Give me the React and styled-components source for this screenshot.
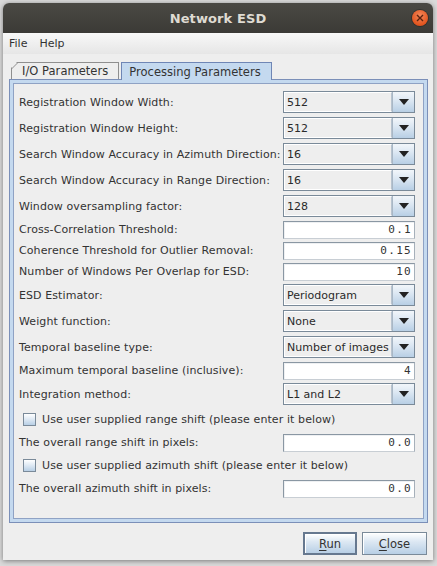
import React from "react";
import styled, { createGlobalStyle, css } from "styled-components";

const Global = createGlobalStyle`
  html, body { margin: 0; padding: 0; }
  body {
    background: #dadada;
    width: 437px;
    height: 566px;
    overflow: hidden;
    font-family: "DejaVu Sans", sans-serif;
  }
`;

const Window = styled.div`
  margin: 3px 0 0 3px;
  width: 430px;
  height: 557px;
  background: #eeeeee;
  border-radius: 6px 6px 0 0;
  box-shadow: 0 1px 5px rgba(0, 0, 0, 0.45);
  display: flex;
  flex-direction: column;
  overflow: hidden;
`;

const TitleBar = styled.div`
  position: relative;
  height: 30px;
  flex: none;
  background: linear-gradient(#4a4944, #3b3a36);
  color: #dfdbd2;
  font: bold 13px "DejaVu Sans", sans-serif;
  display: flex;
  align-items: center;
  justify-content: center;
  letter-spacing: 0.1px;
`;

const CloseBtn = styled.div`
  position: absolute;
  top: 7px;
  right: 5px;
  width: 16px;
  height: 16px;
  border-radius: 50%;
  background: radial-gradient(circle at 50% 35%, #f4875a, #e2551f 70%, #c9461a);
  box-shadow: 0 0 0 1px rgba(0, 0, 0, 0.25);
  display: flex;
  align-items: center;
  justify-content: center;
`;

const MenuBar = styled.div`
  height: 21px;
  flex: none;
  background: linear-gradient(#f8f8f8, #e6e6e6);
  display: flex;
  align-items: center;
  padding-left: 0;
  font-size: 11px;
  color: #333333;
`;

const MenuItem = styled.span`
  padding: 0 6px;
`;

const Body = styled.div`
  flex: 1;
  display: flex;
  flex-direction: column;
  padding: 8px 5px 0 6px;
`;

const TabStrip = styled.div`
  display: flex;
  align-items: flex-end;
  height: 17px;
  padding-left: 2px;
  gap: 2px;
  position: relative;
  z-index: 1;
`;

const Tab = styled.div`
  height: 17px;
  box-sizing: border-box;
  padding: 0 10px 0 10px;
  font-size: 11.5px;
  letter-spacing: 0.03px;
  color: #333333;
  display: flex;
  align-items: center;
  border: 1px solid #8f8f8f;
  border-bottom: none;
  clip-path: polygon(6px 0, 100% 0, 100% 100%, 0 100%, 0 6px);
  background: #eeeeee;
  position: relative;
  ${(p) =>
    p.$selected &&
    css`
      background: #c4d9ef;
      border-color: #6f86b5;
      padding: 0 10px 0 7px;
      height: 18px;
      margin-bottom: -1px;
      clip-path: none;
    `}
`;

const TabSlant = styled.svg`
  position: absolute;
  left: -1px;
  top: -1px;
`;

const TabPanel = styled.div`
  height: 444px;
  box-sizing: border-box;
  border: 1px solid #7b8fb8;
  background: #c4d9ef;
  padding: 3px;
  display: flex;
`;

const TabInner = styled.div`
  flex: 1;
  border: 1px solid #8fa2c4;
  background: #eeeeee;
  padding: 5px 8px 0 5px;
  display: flex;
  flex-direction: column;
`;

const Row = styled.div`
  height: ${(p) => p.$h}px;
  display: grid;
  grid-template-columns: 1fr 132px;
  align-items: center;
  font-size: 11px;
  letter-spacing: 0.09px;
  color: #333333;
  white-space: nowrap;
`;

const CheckRow = styled.div`
  height: ${(p) => p.$h}px;
  display: flex;
  align-items: center;
  padding-left: 4px;
  gap: 6px;
  font-size: 11px;
  letter-spacing: 0.09px;
  color: #333333;
  white-space: nowrap;
`;

const Box = styled.div`
  width: 13px;
  height: 13px;
  box-sizing: border-box;
  border: 1px solid #7a8a99;
  background: linear-gradient(#ffffff, #dde8f3 50%, #b8cfe5);
`;

const Combo = styled.div`
  height: 22px;
  box-sizing: border-box;
  border: 1px solid #7a8a99;
  background: #eeeeee;
  display: flex;
`;

const ComboText = styled.div`
  flex: 1;
  display: flex;
  align-items: center;
  padding-left: 2px;
  border: 1px solid #ffffff;
  border-right: 1px solid #b8c4d0;
  font-size: 11px;
  letter-spacing: 0;
  color: #2a2a2a;
  white-space: nowrap;
  overflow: hidden;
`;

const ComboArrow = styled.div`
  width: 21px;
  flex: none;
  background: linear-gradient(#f2f6fa, #dde8f3 40%, #b8cfe5);
  border-left: 1px solid #a9b7c5;
  display: flex;
  align-items: center;
  justify-content: center;
`;

const Field = styled.div`
  height: 18px;
  box-sizing: border-box;
  background: #ffffff;
  border: 1px solid #8a97a3;
  border-right-color: #a6b0ba;
  border-bottom-color: #c8ced4;
  box-shadow: inset 1px 1px 0 #eef0f2;
  display: flex;
  align-items: center;
  justify-content: flex-end;
  padding-right: 2px;
  font: 11px "DejaVu Sans Mono", monospace;
  letter-spacing: 1.3px;
  color: #333333;
`;

const ButtonBar = styled.div`
  display: flex;
  justify-content: flex-end;
  gap: 5px;
  padding: 9px 1px 0 0;
`;

const Button = styled.div`
  height: 23px;
  width: ${(p) => p.$w}px;
  box-sizing: border-box;
  display: flex;
  align-items: center;
  justify-content: center;
  font-size: 11.5px;
  color: #333333;
  border: 1px solid #7a8a99;
  background: linear-gradient(#ffffff, #dde8f3 40%, #b8cfe5);
  box-shadow: inset 1px 1px 0 #ffffff;
  ${(p) =>
    p.$default &&
    css`
      border: 2px solid #66788f;
      box-shadow: inset 1px 1px 0 #ffffff;
    `}
  u { text-decoration: underline; text-underline-offset: 2px; }
`;

const Arrow = () => (
  <svg width="10" height="6" viewBox="0 0 10 6">
    <path d="M0 0 H10 L5 6 Z" fill="#222" />
  </svg>
);

const ComboBox = ({ value }) => (
  <Combo>
    <ComboText>{value}</ComboText>
    <ComboArrow>
      <Arrow />
    </ComboArrow>
  </Combo>
);

const rows = [
  { t: "combo", l: "Registration Window Width:", v: "512" },
  { t: "combo", l: "Registration Window Height:", v: "512" },
  { t: "combo", l: "Search Window Accuracy in Azimuth Direction:", v: "16" },
  { t: "combo", l: "Search Window Accuracy in Range Direction:", v: "16" },
  { t: "combo", l: "Window oversampling factor:", v: "128" },
  { t: "field", l: "Cross-Correlation Threshold:", v: "0.1" },
  { t: "field", l: "Coherence Threshold for Outlier Removal:", v: "0.15" },
  { t: "field", l: "Number of Windows Per Overlap for ESD:", v: "10" },
  { t: "combo", l: "ESD Estimator:", v: "Periodogram" },
  { t: "combo", l: "Weight function:", v: "None" },
  { t: "combo", l: "Temporal baseline type:", v: "Number of images" },
  { t: "field", l: "Maximum temporal baseline (inclusive):", v: "4" },
  { t: "combo", l: "Integration method:", v: "L1 and L2" },
  { t: "check", l: "Use user supplied range shift (please enter it below)" },
  { t: "field", l: "The overall range shift in pixels:", v: "0.0" },
  { t: "check", l: "Use user supplied azimuth shift (please enter it below)" },
  { t: "field", l: "The overall azimuth shift in pixels:", v: "0.0" },
];

export default function App() {
  return (
    <>
      <Global />
      <Window>
        <TitleBar>
          Network ESD
          <CloseBtn>
            <svg width="8" height="8" viewBox="0 0 8 8">
              <path d="M1 1 L7 7 M7 1 L1 7" stroke="#5a2310" strokeWidth="1.4" />
            </svg>
          </CloseBtn>
        </TitleBar>
        <MenuBar>
          <MenuItem>File</MenuItem>
          <MenuItem>Help</MenuItem>
        </MenuBar>
        <Body>
          <TabStrip>
            <Tab>
              <TabSlant width="8" height="8" viewBox="0 0 8 8">
                <path d="M0.5 7 L7 0.5" stroke="#8f8f8f" strokeWidth="1" />
              </TabSlant>
              I/O Parameters
            </Tab>
            <Tab $selected>Processing Parameters</Tab>
          </TabStrip>
          <TabPanel>
            <TabInner>
              {rows.map((r, i) =>
                r.t === "check" ? (
                  <CheckRow key={i} $h={25}>
                    <Box />
                    {r.l}
                  </CheckRow>
                ) : (
                  <Row key={i} $h={r.t === "combo" ? 26 : 21}>
                    <span>{r.l}</span>
                    {r.t === "combo" ? <ComboBox value={r.v} /> : <Field>{r.v}</Field>}
                  </Row>
                )
              )}
            </TabInner>
          </TabPanel>
          <ButtonBar>
            <Button $w={54} $default>
              <span>
                <u>R</u>un
              </span>
            </Button>
            <Button $w={65}>
              <span>
                <u>C</u>lose
              </span>
            </Button>
          </ButtonBar>
        </Body>
      </Window>
    </>
  );
}
